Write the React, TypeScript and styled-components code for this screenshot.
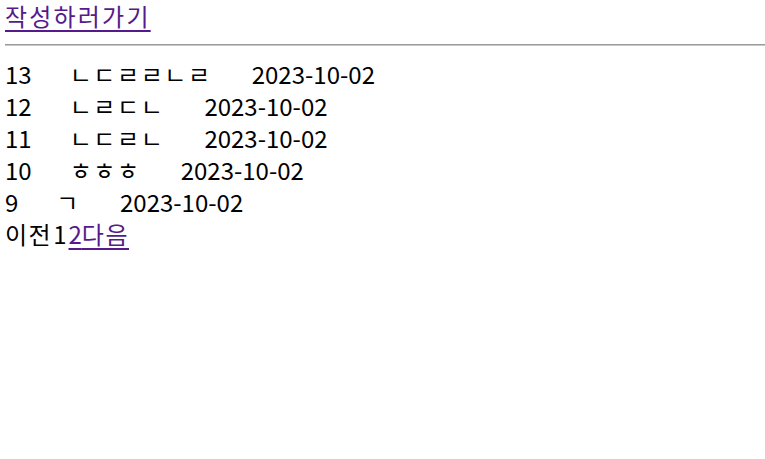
import React from "react";
import styled, { createGlobalStyle } from "styled-components";

const Global = createGlobalStyle`
  html, body { margin: 0; padding: 0; background: #fff; }
  body {
    font-family: "Noto Sans CJK KR", "Noto Sans", sans-serif;
    font-size: 24px;
    line-height: 32px;
    color: #000;
  }
`;

const Page = styled.div`
  padding-left: 5px;
`;

const Link = styled.a`
  color: #551a8b;
  text-decoration: underline;
  text-underline-offset: 4px;
  text-decoration-thickness: 2px;
  cursor: pointer;
`;

const Ko = styled.span<{ $ls?: number }>`
  letter-spacing: ${(p) => p.$ls ?? 2}px;
`;

const Header = styled.div`
  height: 32px;
`;

const Rule = styled.hr`
  margin: 12px 0 12px 0;
  border: none;
  border-top: 1px solid #9a9a9a;
  border-bottom: 1px solid #c8c8c8;
  height: 0;
`;

const List = styled.div`
  display: flex;
  flex-direction: column;
`;

const Row = styled.div`
  display: flex;
  height: 32px;
  white-space: nowrap;
`;

const Num = styled.span`
  margin-right: 38px;
`;

const Title = styled.span`
  letter-spacing: 1.6px;
  margin-right: 40px;
`;

const DateCell = styled.span``;

const Pager = styled.div`
  height: 32px;
  white-space: nowrap;
`;

const Current = styled.span`
  margin: 0 2px 0 1px;
`;

const posts = [
  { id: 13, title: "ㄴㄷㄹㄹㄴㄹ", date: "2023-10-02" },
  { id: 12, title: "ㄴㄹㄷㄴ", date: "2023-10-02" },
  { id: 11, title: "ㄴㄷㄹㄴ", date: "2023-10-02" },
  { id: 10, title: "ㅎㅎㅎ", date: "2023-10-02" },
  { id: 9, title: "ㄱ", date: "2023-10-02" },
];

export default function App() {
  return (
    <>
      <Global />
      <Page>
        <Header>
          <Link>
            <Ko $ls={2.2}>작성하러가기</Ko>
          </Link>
        </Header>
        <Rule />
        <List>
          {posts.map((p) => (
            <Row key={p.id}>
              <Num>{p.id}</Num>
              <Title>{p.title}</Title>
              <DateCell>{p.date}</DateCell>
            </Row>
          ))}
        </List>
        <Pager>
          <Ko $ls={1.5}>이전</Ko>
          <Current>1</Current>
          <Link>
            2<Ko $ls={1.5}>다음</Ko>
          </Link>
        </Pager>
      </Page>
    </>
  );
}
